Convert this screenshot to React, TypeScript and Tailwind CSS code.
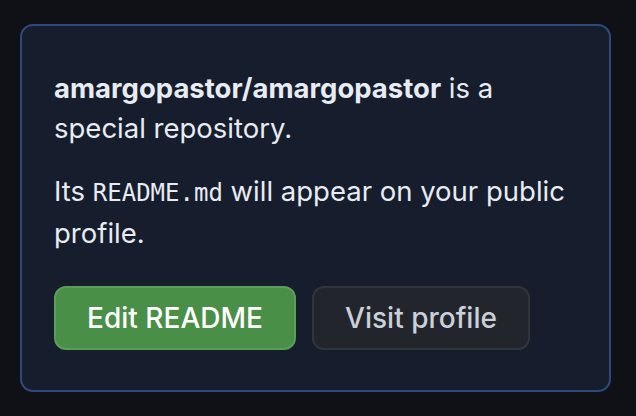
export default function App() {
  return (
    <div className="h-[416px] w-[636px] bg-[#0f1116] pl-[20px] pt-[24px] font-['Inter',sans-serif]">
      <div className="w-[591px] rounded-[13px] border-2 border-[#2e4a7d] bg-[#161d2c] px-[32px] pt-[42px] pb-[40px] text-[27.5px] leading-[40px] text-[#e8ecf2]">
        <p className="mb-[23px]">
          <strong className="font-bold">amargopastor/amargopastor</strong> is a special repository.
        </p>
        <p className="mb-[33px]">
          Its <code className="font-['DejaVu_Sans_Mono',monospace] text-[24px]">README.md</code> will appear on your public profile.
        </p>
        <div className="flex gap-[16px]">
          <button className="h-[64px] w-[242px] rounded-[12px] border-2 border-[#5b9e57] bg-[#4a8f47] text-[28px] font-medium text-white">
            Edit README
          </button>
          <button className="h-[64px] w-[218px] rounded-[12px] border-2 border-[#30343b] bg-[#22262c] text-[28px] font-medium text-[#c9d0da]">
            Visit profile
          </button>
        </div>
      </div>
    </div>
  )
}
